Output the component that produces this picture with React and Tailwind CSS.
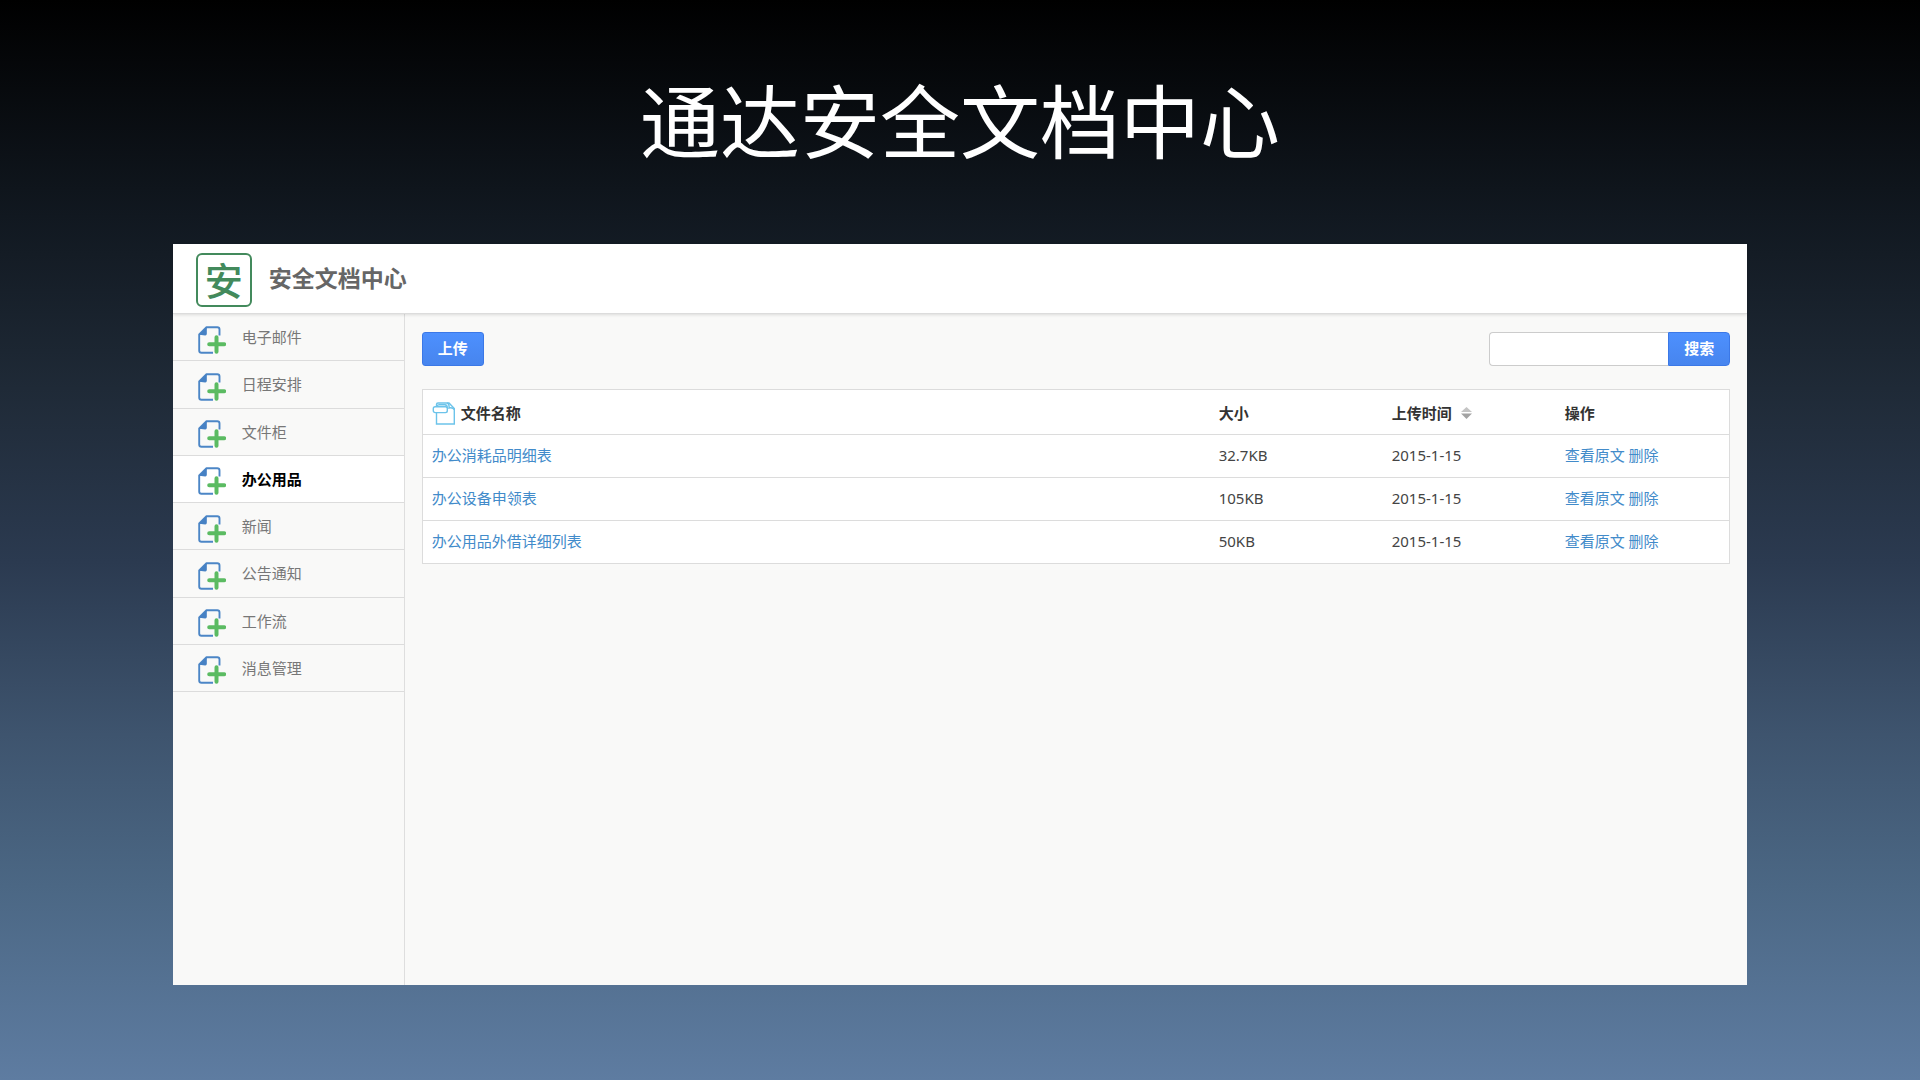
import { useState } from 'react';

const menu = ['电子邮件', '日程安排', '文件柜', '办公用品', '新闻', '公告通知', '工作流', '消息管理'];

const files = [
  { name: '办公消耗品明细表', size: '32.7KB', date: '2015-1-15' },
  { name: '办公设备申领表', size: '105KB', date: '2015-1-15' },
  { name: '办公用品外借详细列表', size: '50KB', date: '2015-1-15' },
];

function AddFileIcon() {
  return (
    <svg className="w-7 h-7 shrink-0" viewBox="0 0 28 28" fill="none" aria-hidden="true">
      <path d="M21.5 9.5V3.5Q21.5 1.2 19.2 1.2H8.5L1.2 8.5V24.5Q1.2 26.8 3.5 26.8H15" stroke="#4c86c6" strokeWidth="1.9" strokeLinejoin="round" />
      <path d="M8.8 1L1 8.8L7.3 9.4Q8.8 9.4 8.8 7.8Z" fill="#4681c4" />
      <path d="M18.5 11.2V25.8M11.2 18.2H26.2" stroke="#5bbb62" strokeWidth="4" strokeLinecap="round" />
    </svg>
  );
}

function DocIcon() {
  return (
    <svg className="w-6 h-6 shrink-0" viewBox="0 0 24 24" fill="none" stroke="#6cc3ea" strokeWidth="1.4" aria-hidden="true">
      <path d="M4.5 5.5V3.6Q4.5 2 6 2H17L22.3 7.5V23H4.5V12" />
      <path d="M15 2Q17.6 3 17 7Q21 6.2 22.3 8.8" />
      <rect x="1.3" y="5.8" width="14" height="5.8" rx="1.8" fill="#fff" />
      <path d="M4.6 5.8Q5 3.8 7.2 3.8H13Q15.3 3.9 15.3 7" />
    </svg>
  );
}

function SortIcon() {
  return (
    <svg className="w-[11px] h-3" viewBox="0 0 11 12" aria-hidden="true">
      <path d="M5.5 0L11 5H0Z" fill="#c4c4c4" />
      <path d="M0 6.4H11L5.5 12Z" fill="#a3a3a3" />
    </svg>
  );
}

export default function App() {
  const [active, setActive] = useState(3);
  const [keyword, setKeyword] = useState('');

  return (
    <div className="min-h-screen flex flex-col items-center pb-[95px] bg-[linear-gradient(to_bottom,#000000_0%,#111820_20%,#1f2a37_36%,#2b3a50_52%,#3e546e_68%,#4b6784_82%,#5e7ca1_100%)] font-['Noto_Sans','Noto_Sans_CJK_SC',sans-serif] text-[15px] leading-6 text-[#444]">
      <h1 className="h-[244px] pb-[10px] flex items-center text-[80px] leading-none font-normal text-white font-['Noto_Sans_CJK_SC',sans-serif]">通达安全文档中心</h1>

      <div className="w-[82%] flex-1 flex flex-col bg-[#f9f9f8]">
        <header className="relative h-[70px] flex items-center gap-[17px] pl-[23px] pb-[2px] bg-white border-b border-[#dcdcdc] shadow-[0_1px_3px_rgba(0,0,0,0.12)]">
          <div className="w-14 h-[54px] mt-1 flex items-center justify-center border-2 border-[#438a5c] rounded-md text-[38px] leading-none font-medium text-[#438a5c]">安</div>
          <h2 className="text-[23px] leading-8 font-bold text-[#666]">安全文档中心</h2>
        </header>

        <div className="flex-1 flex">
          <nav className="w-[232px] shrink-0 border-r border-[#dedede]">
            <ul className="h-[378px] grid auto-rows-fr">
              {menu.map((label, i) => (
                <li key={label} className={i === active ? 'bg-white border-b border-[#dcdcdc]' : 'border-b border-[#dcdcdc]'}>
                  <a
                    href="#"
                    onClick={() => setActive(i)}
                    className={i === active ? 'h-full flex items-center gap-4 pl-[25px] font-bold text-black' : 'h-full flex items-center gap-4 pl-[25px] text-[#777]'}
                  >
                    <span className="pt-[5px]"><AddFileIcon /></span>
                    {label}
                  </a>
                </li>
              ))}
            </ul>
          </nav>

          <main className="flex-1 px-[17px] pt-[18px]">
            <div className="flex justify-between mb-[23px]">
              <button className="w-[62px] h-[34px] pb-[2px] rounded-[3px] border border-[#3b78e7] bg-linear-to-b from-[#4d90fe] to-[#4785ee] font-bold text-white">上传</button>
              <form className="flex" onSubmit={e => e.preventDefault()}>
                <input
                  type="text"
                  aria-label="搜索"
                  value={keyword}
                  onChange={e => setKeyword(e.target.value)}
                  className="w-[179px] h-[34px] px-2 bg-white border border-r-0 border-[#ccc] rounded-l-[4px] outline-none"
                />
                <button className="w-[62px] h-[34px] pb-[2px] rounded-r-[4px] border border-[#3b78e7] bg-linear-to-b from-[#4d90fe] to-[#4785ee] font-bold text-white">搜索</button>
              </form>
            </div>

            <table className="w-full table-fixed border-collapse bg-white border border-[#dcdcdc] text-left">
              <thead>
                <tr className="h-[45px] text-[#333]">
                  <th className="pl-[9px] pt-[2px]">
                    <div className="flex items-center gap-[5px]">
                      <DocIcon />
                      文件名称
                    </div>
                  </th>
                  <th className="w-[173px] pl-[9px] pt-[2px]">大小</th>
                  <th className="w-[173px] pl-[9px] pt-[2px]">
                    <div className="flex items-center gap-[9px]">
                      上传时间
                      <SortIcon />
                    </div>
                  </th>
                  <th className="w-[174px] pl-[9px] pt-[2px]">操作</th>
                </tr>
              </thead>
              <tbody>
                {files.map(f => (
                  <tr key={f.name} className="h-[43px] border-t border-[#dcdcdc]">
                    <td className="pl-[9px] pb-[2px]"><a href="#" className="text-[#428bca]">{f.name}</a></td>
                    <td className="pl-[9px] pb-[2px]">{f.size}</td>
                    <td className="pl-[9px] pb-[2px]">{f.date}</td>
                    <td className="pl-[9px] pb-[2px] text-[#428bca]">
                      <a href="#">查看原文</a> <a href="#">删除</a>
                    </td>
                  </tr>
                ))}
              </tbody>
            </table>
          </main>
        </div>
      </div>
    </div>
  );
}
